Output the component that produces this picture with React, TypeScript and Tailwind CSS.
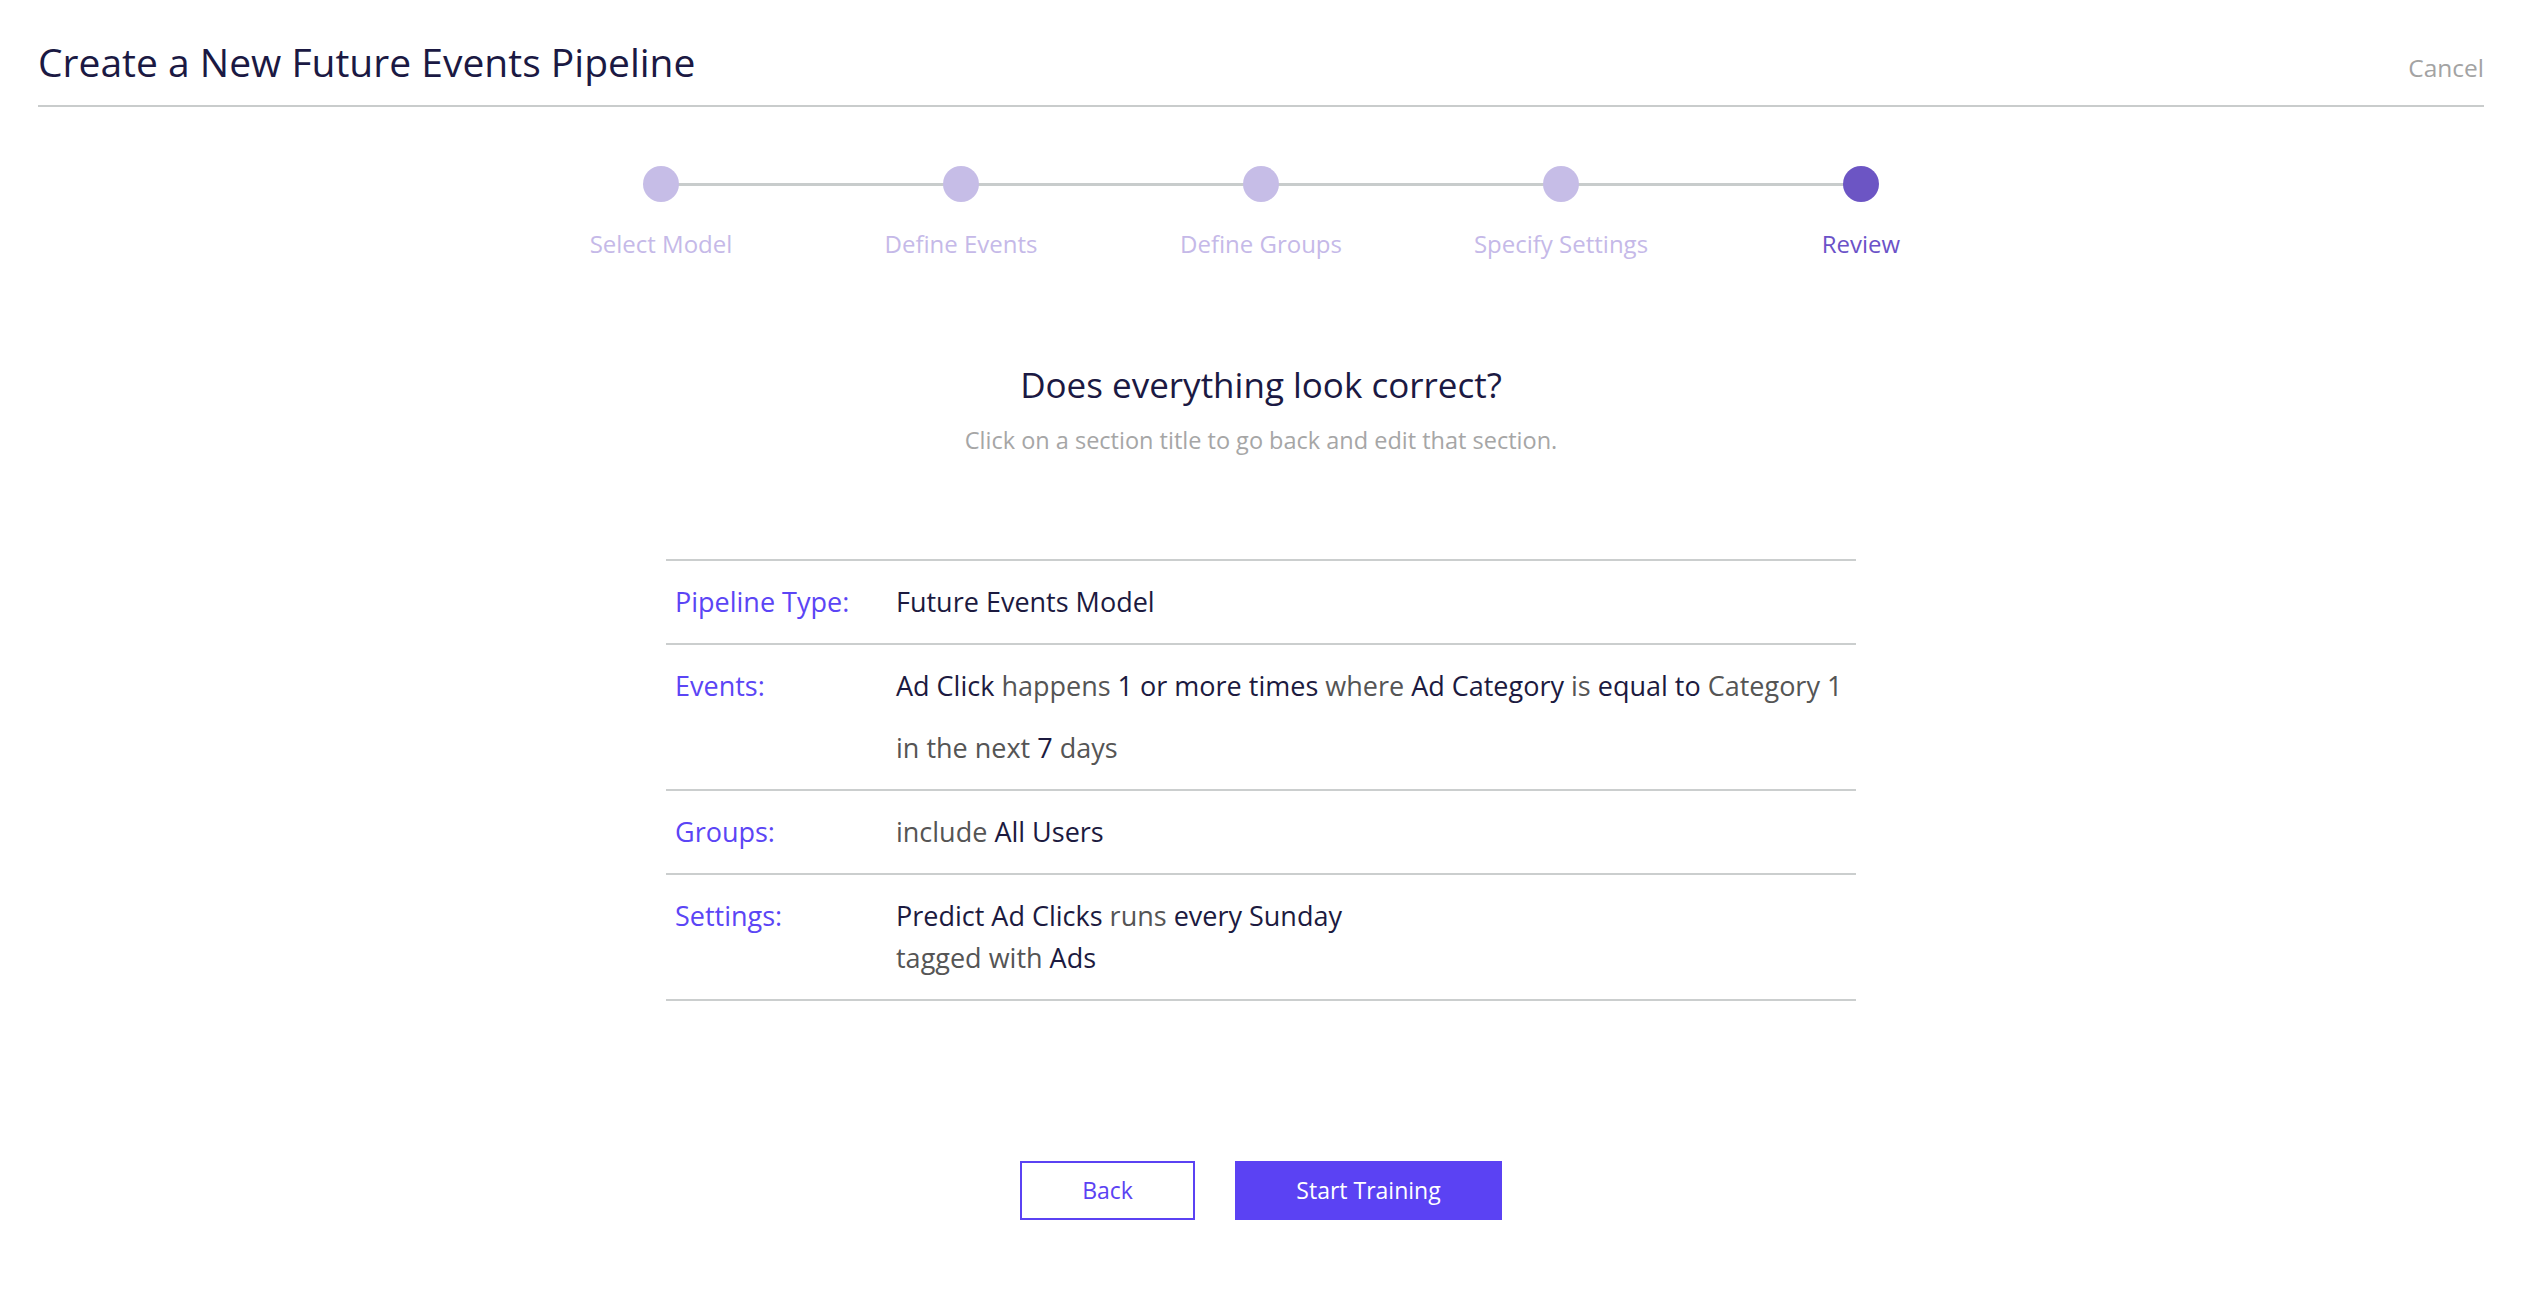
import React from "react"

const steps = [
  { label: "Select Model", active: false },
  { label: "Define Events", active: false },
  { label: "Define Groups", active: false },
  { label: "Specify Settings", active: false },
  { label: "Review", active: true },
]

function Dark({ children }: { children: React.ReactNode }) {
  return <span className="text-[#1c1a40]">{children}</span>
}

function Row({ label, children }: { label: string; children: React.ReactNode }) {
  return (
    <div className="flex border-t-2 border-[#cbcece] py-[20px]">
      <div className="w-[230px] shrink-0 pl-[9px] text-[#5b45f5] leading-[42px]">{label}</div>
      <div className="flex-1 text-[#555555] leading-[42px]">{children}</div>
    </div>
  )
}

export default function App() {
  return (
    <div className="min-h-screen bg-white font-['Open_Sans',sans-serif]">
      {/* Header */}
      <div className="mx-[38px] flex items-baseline justify-between border-b-2 border-[#c9cccc] pt-[40px] pb-[18px]">
        <h1 className="text-[39px] leading-[44px] text-[#1b1943]">Create a New Future Events Pipeline</h1>
        <button className="text-[24.5px] text-[#a3a3a3]">Cancel</button>
      </div>

      {/* Stepper */}
      <div className="mt-[59px] flex justify-center">
        <div className="relative grid grid-cols-5 w-[1500px]">
          <div className="absolute left-[150px] right-[150px] top-[17px] h-[3px] bg-[#c8cccc]" />
          {steps.map((s) => (
            <div key={s.label} className="relative flex flex-col items-center">
              <div className={s.active ? "w-[36px] h-[36px] rounded-full bg-[#6c55c4]" : "w-[36px] h-[36px] rounded-full bg-[#c6bde7]"} />
              <div className={s.active ? "mt-[28px] text-[24px] leading-[28px] text-[#6b52c8]" : "mt-[28px] text-[24px] leading-[28px] text-[#c5b9e8]"}>
                {s.label}
              </div>
            </div>
          ))}
        </div>
      </div>

      {/* Heading */}
      <div className="mt-[107px] flex flex-col items-center">
        <h2 className="text-[35px] leading-[40px] text-[#1b1943]">Does everything look correct?</h2>
        <p className="mt-[21px] text-[23.5px] leading-[28px] text-[#a6a6a6]">Click on a section title to go back and edit that section.</p>
      </div>

      {/* Review table */}
      <div className="mt-[105px] flex justify-center">
        <div className="w-[1190px] border-b-2 border-[#cbcece] text-[27px]">
          <Row label="Pipeline Type:">
            <Dark>Future Events Model</Dark>
          </Row>
          <Row label="Events:">
            <div>
              <Dark>Ad Click</Dark> happens <Dark>1 or more times</Dark> where <Dark>Ad Category</Dark> is{" "}
              <Dark>equal to</Dark> Category 1
            </div>
            <div className="mt-[20px]">
              in the next <Dark>7</Dark> days
            </div>
          </Row>
          <Row label="Groups:">
            include <Dark>All Users</Dark>
          </Row>
          <Row label="Settings:">
            <div>
              <Dark>Predict Ad Clicks</Dark> runs <Dark>every Sunday</Dark>
            </div>
            <div>
              tagged with <Dark>Ads</Dark>
            </div>
          </Row>
        </div>
      </div>

      {/* Actions */}
      <div className="mt-[160px] flex justify-center gap-[40px] pb-[40px]">
        <button className="w-[175px] h-[59px] border-2 border-[#5b42f3] text-[23px] text-[#5b42f3]">Back</button>
        <button className="w-[267px] h-[59px] bg-[#5b42f3] text-[23px] text-white">Start Training</button>
      </div>
    </div>
  )
}
